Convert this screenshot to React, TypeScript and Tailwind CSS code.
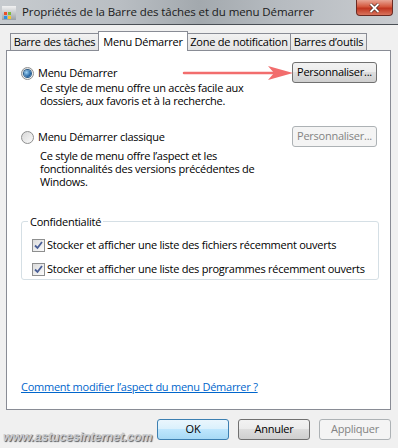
import React from "react";

const font = { fontFamily: '"Open Sans", "Liberation Sans", sans-serif' };

function Radio({ checked }: { checked?: boolean }) {
  return (
    <span className="relative flex h-[13px] w-[13px] shrink-0 items-center justify-center rounded-full border border-[#8e8f8f] bg-gradient-to-br from-[#d8d8d8] to-[#fafafa]">
      {checked && (
        <span className="h-[7px] w-[7px] rounded-full bg-[radial-gradient(circle_at_35%_35%,#9fd2f4,#1a5c9c_70%)] shadow-[0_0_0_1px_#2a5d8a]" />
      )}
    </span>
  );
}

function Check() {
  return (
    <span className="flex h-[13px] w-[13px] shrink-0 items-center justify-center border border-[#8e8f8f] bg-gradient-to-br from-[#dcdcdc] to-[#fbfbfb]">
      <svg width="9" height="9" viewBox="0 0 9 9">
        <path d="M1 4.5 L3.5 7 L8 1" fill="none" stroke="#4a5f97" strokeWidth="1.8" />
      </svg>
    </span>
  );
}

function WinButton({
  children,
  disabled,
  isDefault,
  className = "",
}: {
  children: React.ReactNode;
  disabled?: boolean;
  isDefault?: boolean;
  className?: string;
}) {
  const look = disabled
    ? "border-[#adb2b5] bg-[#f4f4f4] text-[#838383]"
    : isDefault
    ? "border-[#3c7fb1] bg-[linear-gradient(#eaf6fd_0%,#d9f0fc_50%,#bee6fd_50%,#a7d9f5_100%)] text-black"
    : "border-[#707070] bg-[linear-gradient(#f2f2f2_0%,#ebebeb_50%,#dddddd_50%,#cfcfcf_100%)] text-black";
  return (
    <div
      className={`flex h-[21px] items-center justify-center whitespace-nowrap rounded-[3px] border ${look} ${className}`}
    >
      {children}
    </div>
  );
}

export default function App() {
  const tabs = ["Barre des tâches", "Menu Démarrer", "Zone de notification", "Barres d’outils"];
  const widths = ["w-[89px]", "w-[90px]", "w-[104px]", "w-[77px]"];

  return (
    <div
      className="relative flex h-[448px] w-[398px] flex-col overflow-hidden bg-[#f0f0f0] text-[11px] tracking-[-0.25px] text-black"
      style={font}
    >
      {/* barre de titre */}
      <div className="flex h-[25px] shrink-0 items-center border-b border-[#4a4f55] bg-[linear-gradient(90deg,#c7cbcf_0%,#b9bec3_30%,#a3a9ae_50%,#b6bbc0_70%,#c9ccd0_100%)]">
        <div className="ml-[2px] flex h-[16px] w-[16px] items-end">
          <div className="h-[14px] w-[14px] bg-[linear-gradient(#f2f2f2,#9aa0a6)] p-[2px]">
            <div className="mt-[4px] grid h-[7px] w-[7px] grid-cols-2 gap-[1px]">
              <span className="bg-[#e94f2b]" />
              <span className="bg-[#7cb93f]" />
              <span className="bg-[#2d8ee0]" />
              <span className="bg-[#f6c52d]" />
            </div>
          </div>
        </div>
        <span className="ml-[4px] whitespace-nowrap text-[11.5px] tracking-[-0.1px] text-[#1a1a1a]">
          Propriétés de la Barre des tâches et du menu Démarrer
        </span>
        <div className="ml-auto mr-[5px] flex h-[16px] w-[37px] items-center justify-center self-start rounded-b-[4px] border border-t-0 border-[#6b2a22] bg-[linear-gradient(#e8a595,#d4573d_45%,#c0351f_55%,#d9745e)]">
          <svg width="11" height="10" viewBox="0 0 11 10">
            <path d="M1.5 1 L9.5 9 M9.5 1 L1.5 9" stroke="#4a2a22" strokeWidth="3.2" />
            <path d="M1.5 1 L9.5 9 M9.5 1 L1.5 9" stroke="#ffffff" strokeWidth="1.8" />
          </svg>
        </div>
      </div>

      {/* onglets */}
      <div className="mt-[6px] flex h-[19px] items-end pl-[10px]">
        {tabs.map((t, i) => (
          <div
            key={t}
            className={
              i === 1
                ? `relative z-10 -mb-px -ml-px flex h-[20px] ${widths[i]} items-start justify-center whitespace-nowrap border border-b-0 border-[#898c95] bg-white pt-[2px]`
                : `flex h-[17px] ${widths[i]} items-center justify-center whitespace-nowrap border border-b-0 border-[#898c95] bg-[linear-gradient(#f2f2f2,#e3e3e3)] ${i === 0 ? "" : "-ml-px"}`
            }
          >
            {t}
          </div>
        ))}
      </div>

      {/* panneau */}
      <div className="relative mx-[6px] flex h-[360px] w-[385px] flex-col border border-[#898c95] bg-white pl-[14px] pr-[13px] pt-[11px]">
        <div className="flex items-start justify-between">
          <div className="flex flex-col">
            <div className="mt-[4px] flex items-center gap-[4px]">
              <Radio checked />
              <span className="leading-[14px]">Menu Démarrer</span>
            </div>
            <div className="ml-[19px] mt-[1px] leading-[13px]">
              Ce style de menu offre un accès facile aux
              <br />
              dossiers, aux favoris et à la recherche.
            </div>
          </div>
          <WinButton className="w-[85px]">Personnaliser...</WinButton>
        </div>

        <div className="mt-[19px] flex items-start justify-between">
          <div className="flex flex-col">
            <div className="mt-[4px] flex items-center gap-[4px]">
              <Radio />
              <span className="leading-[14px]">Menu Démarrer classique</span>
            </div>
            <div className="ml-[19px] mt-[5px] leading-[13px]">
              Ce style de menu offre l’aspect et les
              <br />
              fonctionnalités des versions précédentes de
              <br />
              Windows.
            </div>
          </div>
          <WinButton disabled className="w-[85px]">Personnaliser...</WinButton>
        </div>

        <fieldset className="mt-[27px] h-[65px] w-[358px] rounded-[3px] border border-[#d5dfe5] px-[10px] pb-0 pt-[10px]">
          <legend className="-ml-[4px] px-[2px] leading-[13px]">Confidentialité</legend>
          <div className="flex flex-col gap-[10px]">
            <div className="flex items-center gap-[2px] whitespace-nowrap leading-[14px]">
              <Check />
              <span>Stocker et afficher une liste des fichiers récemment ouverts</span>
            </div>
            <div className="flex items-center gap-[2px] whitespace-nowrap leading-[14px]">
              <Check />
              <span>Stocker et afficher une liste des programmes récemment ouverts</span>
            </div>
          </div>
        </fieldset>

        <a className="mb-[14px] mt-auto w-fit text-[#0066cc] underline">Comment modifier l’aspect du menu Démarrer ?</a>

        {/* flèche rouge */}
        <svg className="absolute left-[175px] top-[14px]" width="112" height="16" viewBox="0 0 112 16">
          <path d="M2 8 L92 8" stroke="#f26d6d" strokeWidth="2.5" strokeLinecap="round" />
          <path d="M86 1 L111 8 L86 15 L92 8 Z" fill="#f26d6d" />
        </svg>
      </div>

      {/* boutons */}
      <div className="mt-[9px] flex gap-[9px] pl-[157px]">
        <WinButton isDefault className="w-[72px]">OK</WinButton>
        <WinButton className="w-[72px]">Annuler</WinButton>
        <WinButton disabled className="w-[72px]">Appliquer</WinButton>
      </div>

      <div
        className="absolute bottom-[1px] left-[3px] text-[12.5px] font-bold italic tracking-[-0.2px] text-[#c9ccd0] [text-shadow:1px_1px_1px_#55595e]"
        style={{ fontFamily: '"Liberation Sans", sans-serif' }}
      >
        www.astucesinternet.com
      </div>
    </div>
  );
}
